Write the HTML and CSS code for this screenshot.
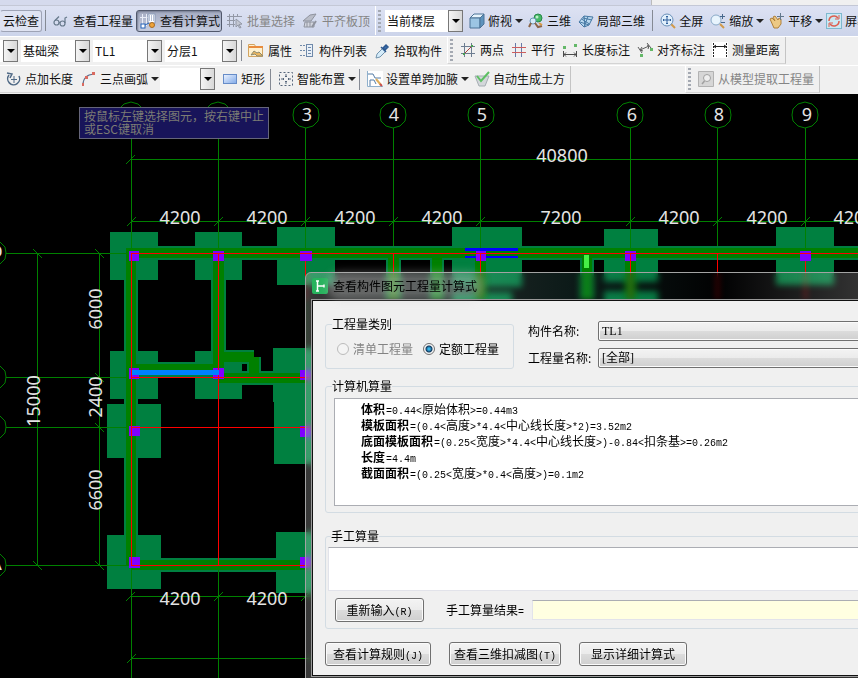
FILE: index.html
```html
<!DOCTYPE html>
<html lang="zh-CN">
<head>
<meta charset="utf-8">
<title>查看构件图元工程量计算式</title>
<link rel="stylesheet" href="styles.css">
</head>
<body>
<header class="toolbars">
  <div class="menu-edge"></div>
  <div class="row row-view">
    <div class="group">
      <button class="tool plain boxed">云检查</button>
      <span class="sep"></span>
      <button class="tool"><svg class="icon" viewBox="0 0 16 16" fill="none" stroke="#66788a" stroke-width="1.2"><circle cx="3.500" cy="9.500" r="2.500"/><circle cx="9.500" cy="10.500" r="2.500"/><path d="M6 9.500h1M2 7.500l4-4M12 10V5l2-1"/></svg>查看工程量</button>
      <button class="tool pressed"><svg class="icon" viewBox="0 0 16 16" fill="none"><path d="M2.500 1v10M6.500 1v12M0 4.500h8" stroke="#e9edf8"/><rect x="8" y="1" width="7" height="9" fill="#fff" stroke="#8899b8"/><path d="M9 3h5M9 5h5M9 7h5" stroke="#6d83b0" stroke-dasharray="1 1"/><rect x="1" y="11" width="4" height="4" fill="#fff" stroke="#2563b8"/><path d="M5 12l4-2" stroke="#2563b8"/><circle cx="12" cy="12" r="2.500" fill="#f0a53a" stroke="#a86a20"/></svg>查看计算式</button>
      <button class="tool" disabled><svg class="icon" viewBox="0 0 16 16" fill="none" stroke="#9398a6"><path d="M2.500 1v13M6.500 1v13M0 3.500h15M0 7.500h8M0 11.500h8M10.500 1v3"/><path d="M9 6l6 5-3 .5 2 3-1.500.5-1.500-3-2 2z" fill="#c3c7d2"/></svg>批量选择</button>
      <button class="tool" disabled><svg class="icon" viewBox="0 0 16 16" stroke="#8f939e"><path d="M1 8l7-6 6-1-5 7z" fill="#b9bdc8"/><path d="M3 9h9v5H2zM5 9v5M8 9v5" fill="#d2d5de"/><path d="M10 14l4-6" fill="none" stroke-width="2"/></svg>平齐板顶</button>
    </div>
    <div class="group grip tight">
      <span class="combo combo-floor"><select aria-label="楼层"><option>当前楼层</option></select></span>
      <button class="tool drop"><svg class="icon" viewBox="0 0 16 16" stroke="#4b7396"><path d="M1 5l4-4h10l-4 4z" fill="#e6f3fb"/><path d="M1 5h10v10H1z" fill="#9cc5e3"/><path d="M11 5l4-4v10l-4 4z" fill="#5e93bd"/></svg>俯视<i class="arrow"></i></button>
      <button class="tool"><svg class="icon" viewBox="0 0 16 16" fill="none"><circle cx="10" cy="5" r="4" fill="#46b866" stroke="#27884a"/><circle cx="9" cy="4" r="1.500" fill="#bdf0c9"/><circle cx="5" cy="8" r="3" fill="#d7ebf8" stroke="#6b98b8"/><path d="M3 10l-2 4M7 10l3 4 4-1" stroke="#8a6548" stroke-width="2"/><path d="M11 10l3 2" stroke="#d99945" stroke-width="2"/></svg>三维</button>
      <button class="tool"><svg class="icon" viewBox="0 0 16 16" fill="#b9d8ef" stroke="#4779a4"><path d="M1 9l5-6 9 1-4 8-5 2z"/><path d="M3.500 6l8 5M6 3l1 11M10 3.500L6 14M5 5l9 2M2 9l9 3" fill="none"/></svg>局部三维</button>
      <span class="sep wide"></span>
      <button class="tool"><svg class="icon" viewBox="0 0 16 16" fill="none"><path d="M11 11l4 4" stroke="#d19a4a" stroke-width="2"/><circle cx="7" cy="7" r="6" fill="#e2f0fc" stroke="#6a90b8"/><path d="M7 3v8M3 7h8M6 4l1-1 1 1M6 10l1 1 1-1M4 6L3 7l1 1M10 6l1 1-1 1" stroke="#2f5f9c"/></svg>全屏</button>
      <button class="tool drop"><svg class="icon" viewBox="0 0 16 16" fill="none"><path d="M10 11l4 4" stroke="#d19a4a" stroke-width="2"/><circle cx="6" cy="7" r="5" fill="#e8f4fd" stroke="#8aaac8"/><path d="M12.500 1v5M10 3.500h5M11 9.500h4" stroke="#47688c"/></svg>缩放<i class="arrow"></i></button>
      <button class="tool drop"><svg class="icon" viewBox="0 0 16 16"><path d="M1 6l2-1 3 3-2-4 2-1 3 4 1-2 2 1v5l-3 4H5z" fill="#edc984" stroke="#b0803a"/><path d="M11.500 0v7M8 3.500h7" stroke="#62788c" fill="none"/></svg>平移<i class="arrow"></i></button>
      <button class="tool close"><svg class="icon" viewBox="0 0 16 16" fill="none"><rect x=".5" y=".5" width="15" height="15" fill="#cbe8f3" stroke="#7eb8ce"/><path d="M3 8a5 5 0 0 1 9-3M13 8a5 5 0 0 1-9 3" stroke="#dd5f50" stroke-width="1.500"/><path d="M13 2v4H9M3 14v-4h4" stroke="#dd5f50"/></svg>屏幕旋转</button>
    </div>
  </div>
  <div class="row">
    <div class="group">
      <span class="combo combo-cut"><select aria-label="构件类别"><option></option></select></span>
      <span class="combo"><select aria-label="构件类型"><option>基础梁</option></select></span>
      <span class="combo"><select aria-label="构件"><option>TL1</option></select></span>
      <span class="combo combo-layer"><select aria-label="分层"><option>分层1</option></select></span>
      <span class="sep slim"></span>
      <button class="tool"><svg class="icon" viewBox="0 0 16 16"><path d="M.500 1.500h6l1 2h7v10H.500z" fill="#fff1cf" stroke="#d2a461"/><path d="M1 4h14" stroke="#e98c3d" stroke-width="2"/><path d="M3 12l3-4 3 2 2-1 4 4H9l-2-2z" fill="#efb75d" stroke="#8a8a70"/></svg>属性</button>
      <button class="tool"><svg class="icon" viewBox="0 0 16 16" fill="none" stroke="#6f89aa"><path d="M1 2.500h2M1 7.500h2M1 12.500h2M4 2.500h2M4 7.500h2M4 12.500h2"/><rect x="7.500" y="1.500" width="6" height="12" fill="#e9f0f8"/><path d="M9 4.500h3M9 7.500h3M9 10.500h3"/></svg>构件列表</button>
      <button class="tool"><svg class="icon" viewBox="0 0 16 16"><path d="M2 15l1-4 6-6 3 3-6 6z" fill="#d5ecfa" stroke="#7293ad"/><path d="M7 4l5 5M9 5l3-3 2 2-3 3z" fill="#3b6fb0" stroke="#2d588f" stroke-width="1.500"/></svg>拾取构件</button>
    </div>
    <div class="group grip ended">
      <button class="tool"><svg class="icon" viewBox="0 0 16 16" fill="none" stroke="#6d7d91"><path d="M4.500 1v14M11.500 1v14M1 4.500h14M1 11.500h14"/><path d="M3 13L13 3" stroke="#a84038"/><path d="M3 11h2v2H3zM11 3h2v2h-2z" fill="#4a9f50" stroke="none"/></svg>两点</button>
      <button class="tool"><svg class="icon" viewBox="0 0 16 16" fill="none" stroke="#6879a8"><path d="M4.500 1v14M10.500 1v14"/><path d="M1 5.500h14M1 10.500h14" stroke="#cc5e5e"/></svg>平行</button>
      <button class="tool"><svg class="icon" viewBox="0 0 16 16" fill="none" stroke="#4c4c4c"><path d="M1.500 9v6M14.500 9v6M2 12.500h12M4 10.500l-2 2 2 2M12 10.500l2 2-2 2"/><path d="M1 4h3v3H1zM12 2h3v3h-3z" fill="#64b868" stroke="none"/></svg>长度标注</button>
      <button class="tool"><svg class="icon" viewBox="0 0 16 16" fill="none" stroke="#5d5d5d"><path d="M1 5l4 6M10 1l4 5M3 8l9-4M5 5L3 8l3 1M10 3l2 1-1 3"/><path d="M3 12h3v3H3zM13 6h3v3h-3z" fill="#64b868" stroke="none"/></svg>对齐标注</button>
      <button class="tool"><svg class="icon" viewBox="0 0 16 16" fill="none" stroke="#222"><path d="M0 0h16v16H0z" fill="#fff" stroke="none"/><path d="M1.500 1v14M14.500 1v14" stroke-dasharray="2 1"/><path d="M2 4.500h12M4 3L2 4.500 4 6M12 3l2 1.500L12 6"/></svg>测量距离</button>
    </div>
  </div>
  <div class="row">
    <div class="group ended tight">
      <button class="tool first"><svg class="icon" viewBox="0 0 16 16" fill="none" stroke="#4f6985" stroke-width="1.500"><path d="M3 4a6 6 0 1 0 10 1M1 2l5 1-2 4"/><path d="M8 5v7M5 8.500h6" stroke-width="1"/></svg>点加长度</button>
      <button class="tool drop roomy-icon"><svg class="icon" viewBox="0 0 16 16" fill="none"><path d="M2 14Q2 4 13 3" stroke="#5d7190" stroke-width="1.200"/><path d="M1 12h2v3H1zM4 5h3v3H4zM11 1h3v3h-3z" fill="#d96a60"/></svg>三点画弧<i class="arrow"></i></button>
      <span class="combo combo-arc"><select aria-label="画弧方式"><option></option></select></span>
      <button class="tool"><svg class="icon" viewBox="0 0 16 16"><defs><linearGradient id="sheet" x2="1" y2="1"><stop stop-color="#eef4ff"/><stop offset="1" stop-color="#7fa9e8"/></linearGradient></defs><rect x="1.500" y="3.500" width="13" height="9" fill="url(#sheet)" stroke="#668cc8"/></svg>矩形</button>
      <span class="sep"></span>
      <button class="tool drop"><svg class="icon" viewBox="0 0 16 16" fill="none" stroke="#55657a"><rect x="1.500" y="1.500" width="13" height="13" stroke-dasharray="2 2"/><path d="M8 3v3M8 10v3M3 8h3M10 8h3M7 5l1 1 1-1M7 11l1-1 1 1M5 7l1 1-1 1M11 7l-1 1 1 1"/></svg>智能布置<i class="arrow"></i></button>
      <span class="sep"></span>
      <button class="tool drop"><svg class="icon" viewBox="0 0 16 16" fill="none"><path d="M0 0h16v16H0z" fill="#fff"/><path d="M.500 0v15.500H16" stroke="#8fb0cc"/><path d="M1 3h5l2 4h6M3 15V9h4l2 4" stroke="#557ca6"/><path d="M9 8l5 6" stroke="#dfae5a" stroke-width="2"/><path d="M13 13l2 2" stroke="#c9504c" stroke-width="2"/></svg>设置单跨加腋<i class="arrow"></i></button>
      <button class="tool"><svg class="icon" viewBox="0 0 16 16"><path d="M1 5h14l-4 10H5z" fill="#d3d7da" stroke="#a5adb3"/><path d="M3 5l4 5 8-9" fill="none" stroke="#5cc062" stroke-width="2"/></svg>自动生成土方</button>
    </div>
    <div class="group grip ended extract">
      <button class="tool" disabled><svg class="icon" viewBox="0 0 16 16" fill="none" stroke="#a0a0a0"><path d="M.500.500h15v15H.500z" fill="#d6d6d6" stroke="#b2b2b2"/><circle cx="9" cy="7" r="3.500" fill="#eee"/><path d="M6.500 10L4 13" stroke-width="1.500"/></svg>从模型提取工程量</button>
    </div>
  </div>
</header>

<main class="workspace">
  <svg class="plan" role="img" aria-label="轴网平面图">
    <g transform="translate(0 -94)" shape-rendering="crispEdges">
      <g class="axis">
        <path d="M131.500 128V678M218.500 128V678M305.500 128V400M393.500 128V300M480.500 128V300M630.500 128V300M717.500 128V300M805.500 128V300"/>
        <path d="M131 159.500H1400M131 221.500H1400M6 253.500H131M6 377.500H131M6 427.500H131M6 565.500H131M131 596.500H400M131 658.500H400M37.500 253V565M99.500 253V565"/>
        <path d="M126 164l9-9M127 226l9-9M214 226l9-9M301 226l9-9M389 226l9-9M476 226l9-9M626 226l9-9M713 226l9-9M801 226l9-9M126 601l9-9M214 601l9-9M301 601l9-9M127 663l9-9M33 249l9 9M95 249l9 9M95 373l9 9M95 423l9 9M33 561l9 9M95 561l9 9"/>
      </g>
      <g class="footing">
        <path d="M110 232h48v48h-48zM195 232h47v48h-47zM277 227h58v58h-58zM452 227h70v60h-70zM452 292h60v20h-60zM604 229h54v53h-54zM604 291h54v20h-54zM776 227h58v58h-58z"/>
        <path d="M110 351h48v48h-48zM195 351h47v48h-47zM273 348h60v54h-60zM274 402h60v62h-60zM107 404h54v54h-54zM107 535h54v54h-54zM276 532h60v61h-60z"/>
        <path d="M126 246h1280v14H126zM124 253h14v312h-14zM211 253h15v124h-15zM138 362h80v16h-80zM224 350h30v14h-30zM247 357h14v16h-14zM218 371h90v14h-90zM131 558h180v14H131zM386 258h15v42h-15zM430 258h14v42h-14zM580 258h14v42h-14z"/>
      </g>
      <g class="beam">
        <path d="M126 248h1280v10H126zM126 253h10v312h-10zM213 253h11v124h-11zM136 364h82v11h-82zM224 352h30v10h-30zM249 357h10v18h-10zM218 373h90v10h-90zM131 560h180v10H131zM388 258h11v42h-11zM432 258h10v42h-10zM475 258h11v42h-11zM582 258h10v42h-10zM625 258h11v42h-11z"/>
      </g>
      <path class="axis" d="M110 253.500H131M110 377.500H131M107 427.500H131M107 565.500H131M131.500 232V253M218.500 232V253M305.500 227V253M480.500 227V253M630.500 229V253M805.500 227V253M131.500 565V596M218.500 570V596"/>
      <path class="column" d="M129 251h10v10h-10zM213 251h11v10h-11zM300 251h12v10h-12zM476 251h10v10h-10zM625 251h11v10h-11zM800 251h11v10h-11zM129 368h10v11h-10zM213 368h11v11h-11zM300 370h12v10h-12zM129 426h11v10h-11zM300 426h12v11h-12zM129 557h11v11h-11zM300 557h12v11h-12z"/>
      <path fill="#00f" d="M465 248h53v3h-53zM465 256h53v2h-53z"/>
      <path fill="#46f046" d="M584 255h5v13h-5z"/>
      <path class="redline" d="M131 253.500H1400M131 377.500H320M131 427.500H320M131 565.500H320M131.500 253V565M218.500 253V565M305.500 261V300M393.500 253V300M480.500 261V300M630.500 253V300M717.500 253V300M805.500 261V300"/>
      <path fill="#8000ff" d="M476 251h10v10h-10z"/>
      <path class="redline" d="M476 253.500H486M480.500 253V272"/>
      <path fill="#0080ff" d="M132 370h87v5h-87z"/>
    </g>
    <g transform="translate(0 -94)">
      <defs><path id="bubble" d="M0-13l7 2 5 5 1 6-1 6-5 5-7 2-7-2-5-5-1-6 1-6 5-5z"/></defs>
      <g class="bubbles">
        <use href="#bubble" x="131" y="115"/><use href="#bubble" x="218" y="115"/><use href="#bubble" x="306" y="115"/><use href="#bubble" x="393" y="115"/><use href="#bubble" x="481" y="115"/><use href="#bubble" x="630" y="115"/><use href="#bubble" x="718" y="115"/><use href="#bubble" x="805" y="115"/>
        <use href="#bubble" x="-7" y="253"/><use href="#bubble" x="-7" y="377"/><use href="#bubble" x="-7" y="427"/><use href="#bubble" x="-7" y="565"/>
      </g>
      <g class="dims">
        <text x="307" y="121">3</text><text x="394" y="121">4</text><text x="482" y="121">5</text><text x="632" y="121">6</text><text x="719" y="121">8</text><text x="807" y="121">9</text>
        <text x="562" y="162">40800</text>
        <text x="180" y="224">4200</text><text x="267" y="224">4200</text><text x="355" y="224">4200</text><text x="442" y="224">4200</text><text x="561" y="224">7200</text><text x="679" y="224">4200</text><text x="767" y="224">4200</text><text x="854" y="224">4200</text>
        <text x="180" y="605">4200</text><text x="267" y="605">4200</text>
        <text x="-4" y="258">D</text><text x="-4" y="570">A</text>
        <text transform="translate(102 309) rotate(-90)">6000</text>
        <text transform="translate(102 397) rotate(-90)">2400</text>
        <text transform="translate(102 490) rotate(-90)">6600</text>
        <text transform="translate(40 401) rotate(-90)">15000</text>
      </g>
    </g>
  </svg>

  <p class="hint">按鼠标左键选择图元，按右键中止或ESC键取消</p>

  <section class="dialog" role="dialog" aria-labelledby="dialog-title">
    <div class="titlebar">
      <svg class="app-icon" viewBox="0 0 16 16"><rect width="16" height="16" rx="2" fill="#27b35d"/><path d="M4 3h3M4 13h3M5.500 3v10M5.500 8H12M12 6.500v3" fill="none" stroke="#fff" stroke-width="1.500"/></svg>
      <h1 id="dialog-title">查看构件图元工程量计算式</h1>
    </div>
    <form class="panel">
      <div class="top">
        <fieldset class="kinds">
          <legend>工程量类别</legend>
          <label class="off"><input type="radio" name="kind" disabled>清单工程量</label>
          <label><input type="radio" name="kind" checked>定额工程量</label>
        </fieldset>
        <div class="names">
          <label for="part">构件名称:</label>
          <select id="part"><option>TL1</option></select>
          <label for="quantity">工程量名称:</label>
          <select id="quantity"><option>[全部]</option></select>
        </div>
      </div>
      <fieldset class="computed">
        <legend>计算机算量</legend>
        <div class="result">
          <p><b>体积</b><span class="m">=0.44&lt;</span>原始体积<span class="m">&gt;=0.44m3</span></p>
          <p><b>模板面积</b><span class="m">=(0.4&lt;</span>高度<span class="m">&gt;*4.4&lt;</span>中心线长度<span class="m">&gt;*2)=3.52m2</span></p>
          <p><b>底面模板面积</b><span class="m">=(0.25&lt;</span>宽度<span class="m">&gt;*4.4&lt;</span>中心线长度<span class="m">&gt;)-0.84&lt;</span>扣条基<span class="m">&gt;=0.26m2</span></p>
          <p><b>长度</b><span class="m">=4.4m</span></p>
          <p><b>截面面积</b><span class="m">=(0.25&lt;</span>宽度<span class="m">&gt;*0.4&lt;</span>高度<span class="m">&gt;)=0.1m2</span></p>
        </div>
      </fieldset>
      <fieldset class="manual">
        <legend>手工算量</legend>
        <textarea aria-label="手工算量"></textarea>
        <div class="manual-row">
          <button type="button" class="btn reset">重新输入<span class="m">(R)</span></button>
          <label for="sum">手工算量结果<span class="m">=</span></label>
          <input id="sum" type="text" readonly>
        </div>
      </fieldset>
      <div class="actions">
        <button type="button" class="btn">查看计算规则<span class="m">(J)</span></button>
        <button type="button" class="btn snug">查看三维扣减图<span class="m">(T)</span></button>
        <button type="button" class="btn roomy">显示详细计算式</button>
      </div>
    </form>
  </section>
</main>
</body>
</html>
```
FILE: styles.css
```css
* { box-sizing: border-box; }

body {
  margin: 0;
  height: 100vh;
  display: flex;
  flex-direction: column;
  overflow: hidden;
  background: #000;
  color: #111;
  font: 12px/16px "Noto Sans CJK SC", sans-serif;
}

button, select, input, textarea { font: inherit; color: inherit; margin: 0; }

/* Toolbars */
.toolbars { flex: none; background: #f0f0f0; overflow: hidden; }
.menu-edge { width: 76%; height: 5px; background: #d5daed; border-right: 1px solid #bbb; }
.row { display: flex; height: 29px; padding-bottom: 1px; border-top: 1px solid #fff; white-space: nowrap; }
.row-view {
  height: 31px;
  border-top: 1px solid #c4c8d6;
  background: linear-gradient(#dde2f3, #ccd4ea);
}
.group { display: flex; flex: none; align-items: center; gap: 1px; padding-right: 3px; }
.row + .row .group.ended { border-right: 1px solid #c4c4c4; border-bottom: 1px solid #d4d4d4; }
.grip { border-left: 1px solid #fff; }
.grip::before {
  content: "";
  width: 3px;
  height: 22px;
  margin: 0 2px;
  background: repeating-linear-gradient(#a4a9b2 0 2px, transparent 2px 4px);
}
.row-view .grip::before { margin-right: 3px; }
.extract { margin-left: 114px; }

.tool {
  flex: none;
  display: flex;
  align-items: center;
  gap: 4px;
  height: 22px;
  padding: 0 1px 0 3px;
  border: 1px solid transparent;
  border-radius: 3px;
  background: none;
}
.tight .tool { gap: 3px; }
.tool:disabled { color: #858585; }
.tool.plain { padding: 0 2px; }
.tool.boxed { border-color: #9ea3b5; border-left-color: transparent; background: #dfe3f2; }
.tool.pressed { border-color: #51586b; background: linear-gradient(#a4abc2, #c6cde0); box-shadow: inset 1px 1px 2px #767d92; }
.tool.drop { padding-right: 0; border-right: 0; }
.tool.first { margin-left: 2px; }
.tool.roomy-icon { margin-left: 1px; }
.tool.close { padding-left: 1px; }
.icon { flex: none; width: 16px; height: 16px; }
.arrow { width: 7px; border: solid transparent; border-width: 4px 4px 0; border-top-color: #222; }
.sep { width: 1px; height: 21px; margin: 0 2px; background: #858a94; }
.sep.wide { margin: 0 2px 0 4px; }
.sep.slim { margin: 0 1px; }

.combo { position: relative; width: 69px; margin-right: 2px; }
.combo select {
  display: block;
  width: 100%;
  height: 22px;
  padding: 0 14px 0 2px;
  border: 0;
  border-radius: 0;
  appearance: none;
  background: #fff;
}
.combo::before {
  content: "";
  position: absolute;
  inset: 0 0 0 auto;
  width: 13px;
  border: 1px solid #777;
  background: linear-gradient(90deg, #f4f4f4, #d8d8d8);
  pointer-events: none;
}
.combo::after {
  content: "";
  position: absolute;
  right: 3px;
  top: 9px;
  border: solid transparent;
  border-width: 4px 4px 0;
  border-top-color: #000;
  pointer-events: none;
}
.combo-floor { width: 78px; margin-right: 1px; }
.combo-cut { width: 18px; }
.combo-layer { width: 72px; }
.combo-arc { width: 55px; }

/* Drawing area */
.workspace { position: relative; flex: 1; min-height: 0; overflow: hidden; }
.plan { display: block; width: 100%; height: 100%; }
.axis { fill: none; stroke: #008000; }
.footing { fill: #008040; }
.beam { fill: #008000; }
.column { fill: #8000ff; }
.redline { fill: none; stroke: #f00; }
.bubbles { fill: none; stroke: #008000; }
.dims { fill: #e4e4e4; font: 18px "Noto Sans", sans-serif; text-anchor: middle; }

.hint {
  position: absolute;
  left: 79px;
  top: 13px;
  width: 190px;
  margin: 0;
  padding: 1px 4px 3px;
  border: 1px solid #65657a;
  background: #18145a;
  color: #7c7c74;
  line-height: 13px;
}

/* Dialog */
.dialog {
  position: absolute;
  left: 305px;
  right: -40px;
  top: 178px;
  padding: 0 6px 2px;
  border: 1px solid #a3a3a3;
  border-radius: 6px 6px 0 0;
  background: linear-gradient(90deg, rgba(255, 255, 255, .22), rgba(60, 130, 120, .2) 45%, rgba(10, 12, 20, .1) 70%, rgba(255, 255, 255, .25));
  backdrop-filter: blur(3px);
}
.titlebar { display: flex; align-items: center; gap: 5px; height: 27px; padding-bottom: 2px; }
.app-icon { width: 16px; height: 16px; }
.titlebar h1 {
  margin: 0;
  border-radius: 8px;
  background: rgba(200, 200, 200, .35);
  box-shadow: 0 0 8px 6px rgba(200, 200, 200, .35);
  color: #000;
  font: inherit;
}
.panel {
  padding: 15px 12px 9px;
  border: 1px solid #111;
  outline: 1px solid #999;
  background: #f0f0f0;
  color: #000;
}
.m { font: 10px/1 "Liberation Mono", monospace; }

fieldset {
  min-width: 0;
  margin: 0;
  padding: 0;
  border: 1px solid #d3dce3;
  border-radius: 3px;
}
legend { padding: 0; }
.top { display: flex; gap: 14px; }
.kinds { display: flex; width: 189px; height: 53px; padding: 9px 0 0 6px; }
.kinds label { display: flex; align-items: center; gap: 4px; height: 16px; margin: 0 5px; }
.kinds .off { color: #838383; }
.kinds input {
  appearance: none;
  width: 12px;
  height: 12px;
  border: 1px solid #707070;
  border-radius: 50%;
  background: #f4f4f4;
}
.kinds input:checked { background: radial-gradient(circle at 50% 50%, #38b4e8 0 1px, #123a60 3px, #f4f4f4 4px); }
.kinds input:disabled { border-color: #bbb; }

.names {
  flex: 1;
  display: grid;
  grid-template-columns: 66px 1fr;
  column-gap: 4px;
  row-gap: 7px;
  align-content: start;
  align-items: center;
  padding-top: 5px;
  white-space: nowrap;
}
.names select {
  appearance: none;
  height: 20px;
  padding: 0 3px;
  border: 1px solid #707070;
  border-radius: 2px;
  background: linear-gradient(#f3f3f3, #ebebeb 50%, #dcdcdc 50%, #cfcfcf);
  box-shadow: inset 0 0 0 1px #fbfbfb;
  font: 12px/16px "Liberation Serif", "Noto Sans CJK SC", serif;
}

.computed { margin-top: 9px; padding: 4px 8px 6px 6px; }
.result { height: 108px; margin-left: 2px; padding: 2px 26px; border: 1px solid #abadb3; background: #fff; white-space: nowrap; }
.result p { margin: 0; height: 16px; }
.result b { padding-right: 1px; }
.manual { margin-top: 15px; padding: 3px 2px 6px; }
.manual legend { margin-left: 3px; }
.manual textarea {
  display: block;
  width: 100%;
  height: 44px;
  border: 1px solid #e2e3ea;
  border-top-color: #abadb3;
  resize: none;
  background: #fff;
}
.manual-row { display: flex; align-items: center; gap: 8px; margin: 7px 0 0 7px; }
.manual-row input { flex: 1; height: 20px; border: 1px solid #e2e3ea; border-top-color: #abadb3; background: #ffffe1; }
.btn {
  height: 24px;
  padding: 0 7px;
  border: 1px solid #707070;
  border-radius: 3px;
  background: linear-gradient(#f3f3f3, #ebebeb 50%, #dcdcdc 50%, #cfcfcf);
  box-shadow: inset 0 0 0 1px #fbfbfb;
  white-space: nowrap;
}
.btn.reset { width: 89px; margin-right: 14px; }
.btn.snug { padding: 0 4px; }
.btn.roomy { padding: 0 11px; }
.actions { display: flex; gap: 18px; margin-top: 13px; }
```
